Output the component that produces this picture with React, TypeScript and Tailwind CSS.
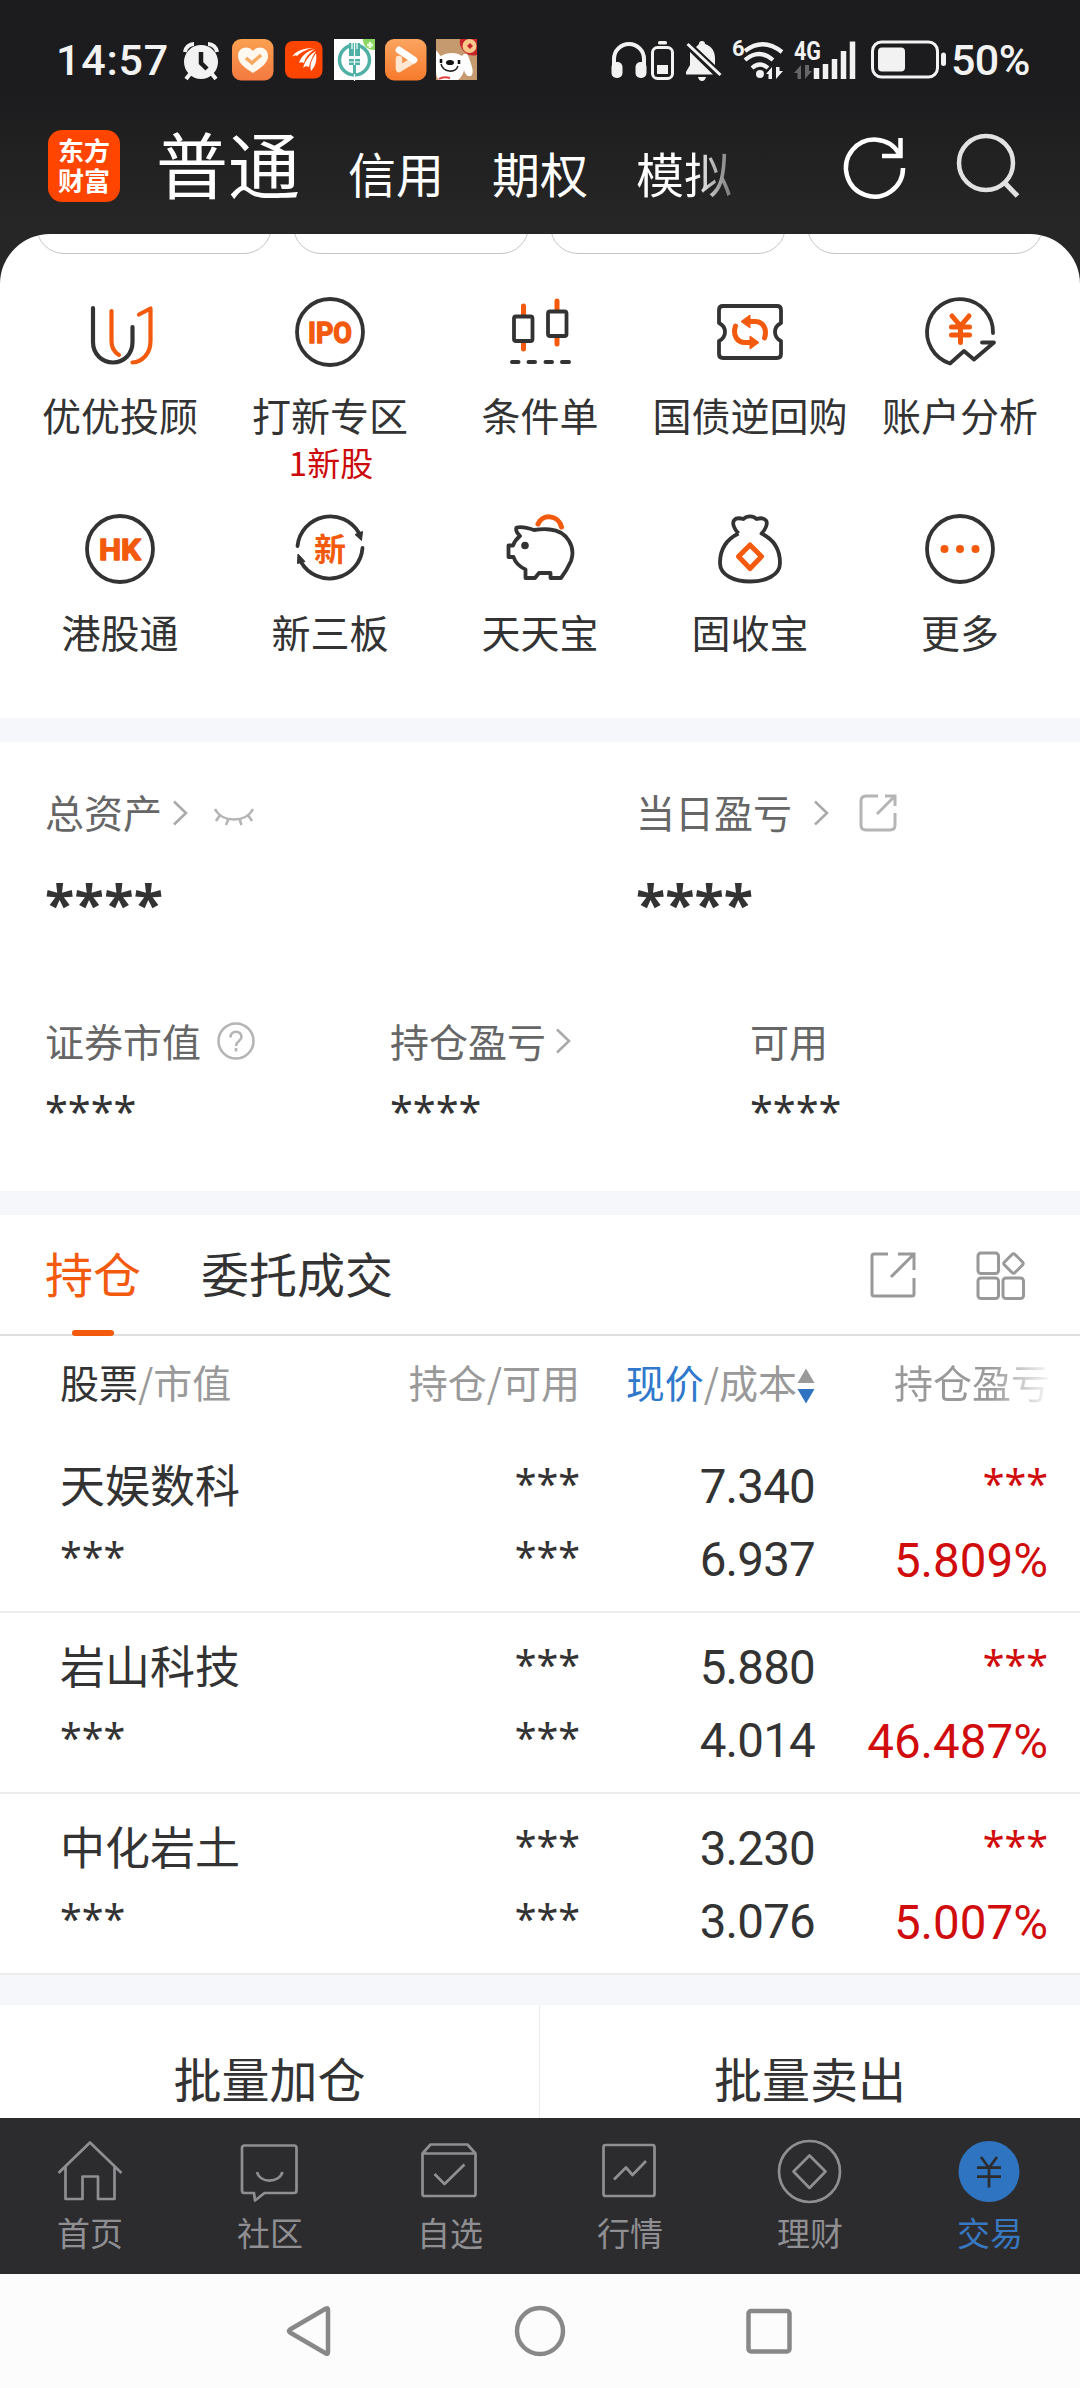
import type { ReactNode } from "react";

const CJK = "font-['Noto_Sans_CJK_SC',sans-serif]";

function Svg({ w, h, className = "", children }: { w: number; h: number; className?: string; children: ReactNode }) {
  return (
    <svg width={w} height={h} viewBox={`0 0 ${w} ${h}`} fill="none" className={`shrink-0 overflow-visible ${className}`}>
      {children}
    </svg>
  );
}

/* ---------- status bar ---------- */

function StatusBar() {
  return (
    <div className="flex h-[120px] items-center pl-[56px] text-[#f2f2f2]">
      <span className="w-[126px] font-[Roboto,sans-serif] text-[43px] font-medium leading-[50px] tracking-[0.8px]">14:57</span>
      <Svg w={38} h={46}>
        <circle cx="19" cy="25" r="17" fill="#f2f2f2" />
        <path d="M3 15a9 9 0 0 1 9-8M35 15a9 9 0 0 0-9-8M8 37l-4 5M30 37l4 5" stroke="#f2f2f2" strokeWidth="4" />
        <path d="M19 15v11l6 6" stroke="#1c1c1e" strokeWidth="4.5" />
      </Svg>
      <Svg w={42} h={46} className="ml-[12px]">
        <defs>
          <linearGradient id="appA" x1="0" y1="0" x2="0" y2="1">
            <stop stopColor="#faa050" />
            <stop offset="1" stopColor="#f47a40" />
          </linearGradient>
        </defs>
        <rect y="2" width="41.500" height="41.500" rx="9" fill="url(#appA)" />
        <path d="M21 36C13 31 6 26 6 19c0-9 10-11 15-5 5-6 15-4 15 5 0 7-7 12-15 17z" fill="#fff8ef" />
        <path d="m14 21 6 5 9-8" stroke="#f9a860" strokeWidth="3.500" />
      </Svg>
      <Svg w={38} h={46} className="ml-[11px]">
        <rect y="4" width="37.500" height="37.500" rx="8" fill="#ff4500" />
        <path d="M7 20c3-6 12-9 22-9-7 1-13 4-17 8-2-1-4 0-5 1zM14 26c2-7 8-12 16-14-6 4-10 9-11 14-2-1-4-1-5 0zM18 31c2-7 6-13 13-17-4 6-6 11-7 16-2-1-4-1-6 1zM26 34c-2-7 2-13 5-18 1 7 0 13-5 18z" fill="#fff" />
      </Svg>
      <Svg w={41} h={46} className="ml-[11px]">
        <rect y="2" width="41" height="41" fill="#fff" />
        <path d="M29 2h12v11c-8 0-12-4-12-11z" fill="#8bd660" />
        <path d="M36 5v6M33 8h6" stroke="#e8ffd8" strokeWidth="2.500" />
        <circle cx="20.500" cy="23" r="15" stroke="#4fb0a5" strokeWidth="3.500" />
        <path d="M15 6h11v13h-11zM15 22h11v6h-11z" fill="#4fb0a5" />
        <path d="M20.500 4v40M18 4v8M23 4v8M15 25h11" stroke="#fff" strokeWidth="1.200" />
        <path d="M20.500 28v9" stroke="#4fb0a5" strokeWidth="3" />
      </Svg>
      <Svg w={42} h={46} className="ml-[10px]">
        <defs>
          <linearGradient id="appB" x1="0" y1="0" x2="0" y2="1">
            <stop stopColor="#fba560" />
            <stop offset="1" stopColor="#f67a2c" />
          </linearGradient>
        </defs>
        <rect y="2" width="41.500" height="41.500" rx="9" fill="url(#appB)" />
        <path d="M14 13 29 23 14 32V22" stroke="#ffe6d0" strokeWidth="6.500" strokeLinecap="round" strokeLinejoin="round" />
        <path d="M14 13 29 23" stroke="#fff" strokeWidth="6.500" strokeLinecap="round" />
      </Svg>
      <Svg w={41} h={46} className="ml-[9px]">
        <rect y="2" width="41" height="41" fill="#c59a6e" />
        <path d="M0 14c2 0 3 4 5 5 6-4 16-4 21 0 3-4 6-2 7 2 2 6 5 12 3 17-3 3-7 0-8-5-1 5-3 7-6 10H3C0 40 0 36 0 32z" fill="#fff" />
        <path d="M24 2h17v16c-9 3-19-6-17-16z" fill="#c9252b" />
        <circle cx="33.500" cy="9" r="7" fill="#f8c98a" />
        <path d="m34 6 3 3-3 3-3-3z" fill="#c9252b" />
        <ellipse cx="14" cy="25.500" rx="4" ry="2.600" fill="#111" />
        <path d="M5 27c2 8 14 10 17 2" stroke="#222" strokeWidth="1.500" />
        <path d="M5 22v4M23 23v4" stroke="#111" strokeWidth="2.600" />
        <path d="M3 42c3-2 7-2 11-1" stroke="#e04040" strokeWidth="2" />
      </Svg>

      <Svg w={36} h={46} className="ml-[134px]">
        <path d="M3 29V22a15 15 0 0 1 30 0v7" stroke="#f2f2f2" strokeWidth="4" />
        <rect x="0.500" y="25" width="11" height="16" rx="5" fill="#f2f2f2" />
        <rect x="24.500" y="25" width="11" height="16" rx="5" fill="#f2f2f2" />
      </Svg>
      <Svg w={24} h={46} className="ml-[4px]">
        <rect x="7" y="4" width="9" height="3.500" rx="1.500" fill="#f2f2f2" />
        <rect x="1.500" y="10.500" width="20" height="31" rx="5" stroke="#f2f2f2" strokeWidth="3" />
        <rect x="6" y="28" width="11" height="9" fill="#f2f2f2" />
      </Svg>
      <Svg w={36} h={46} className="ml-[11px]">
        <path d="M4 15v13l-4 7v2.500h27zM10 10l3-3q0-3 3-3t3 3c7 2 10 8 10 14v7zM12 40h8q-1 4-4 4t-4-4z" fill="#f2f2f2" />
        <path d="m1.500 7 33 31" stroke="#f2f2f2" strokeWidth="3" />
      </Svg>
      <Svg w={54} h={46} className="ml-[10px]">
        <text x="0" y="18.500" fill="#f2f2f2" className="font-[Roboto,sans-serif] text-[22px] font-bold">6</text>
        <path d="M13 14q18-14 37 1M13 23q14-12 28 0M20 31q8-7 16 0" stroke="#f2f2f2" strokeWidth="4.200" />
        <circle cx="28" cy="37" r="4" fill="#f2f2f2" />
        <path d="M34 37l6-7v12h-3.500v-5zM44 30v12l7-8h-3.500v-4z" fill="#f2f2f2" />
      </Svg>
      <Svg w={64} h={46} className="ml-[8px]">
        <text x="0" y="23" textLength="27" lengthAdjust="spacingAndGlyphs" fill="#f2f2f2" className="font-[Roboto,sans-serif] text-[26px] font-bold">4G</text>
        <path d="M0 36l7-8v14H3.500v-6zM11 28v14l7-8h-3v-6z" fill="#666" />
        <path d="M22.500 31v11M31.500 27v15M40.500 22v20M49.500 14v28M58.500 4.500v37.500" stroke="#f2f2f2" strokeWidth="5.500" />
      </Svg>
      <Svg w={77} h={46} className="ml-[13px]">
        <rect x="1.500" y="5" width="65" height="35" rx="9" stroke="#f2f2f2" strokeWidth="3" />
        <rect x="7" y="10.500" width="27" height="24" rx="4" fill="#f2f2f2" />
        <rect x="70" y="15.500" width="5" height="13.500" rx="2.500" fill="#f2f2f2" />
      </Svg>
      <span className="ml-[3px] font-[Roboto,sans-serif] text-[43px] font-medium leading-[50px] tracking-[-0.600px]">50%</span>
    </div>
  );
}

/* ---------- header ---------- */

function Header() {
  return (
    <div className="flex h-[114px] pl-[48px] text-white">
      <div className="mt-[10px] flex h-[72px] w-[72px] shrink-0 flex-col items-center justify-center rounded-[14px] bg-[#ff4500] text-[26px] font-bold leading-[30px] pb-[2px]">
        <span>东方</span>
        <span>财富</span>
      </div>
      <div className="ml-[36px] flex h-[100px] w-[640px] items-baseline whitespace-nowrap text-[48px] leading-[84px]">
        <span className="text-[72px]">普通</span>
        <span className="ml-[48px]">信用</span>
        <span className="ml-[48px]">期权</span>
        <span className="ml-[48px] bg-linear-to-r from-white from-60% to-[#777] bg-clip-text text-transparent">模拟</span>
      </div>
      <Svg w={66} h={66} className="ml-[47px] mt-[14px]">
        <path d="M60 34A28.500 28.500 0 1 1 56 19.500" stroke="#fff" strokeWidth="4.500" />
        <path d="M39 22h18.500V4" stroke="#fff" strokeWidth="4.500" />
      </Svg>
      <Svg w={66} h={66} className="ml-[48px] mt-[13px]">
        <circle cx="29" cy="30" r="27" stroke="#e2e2e2" strokeWidth="4.500" />
        <path d="m47 49 13.500 14" stroke="#e2e2e2" strokeWidth="5" />
      </Svg>
    </div>
  );
}

/* ---------- shortcut grid ---------- */

const INK = "#333333";
const ORANGE = "#f35a0d";

const IconUJ = () => (
  <Svg w={72} h={72}>
    <g strokeWidth="4.200" strokeLinecap="round" strokeLinejoin="round">
      <path d="M9 12V46C9 58 18 66.500 29 66.500S48.500 58 48.500 46V31" stroke={INK} />
      <path d="M27.500 15V45C27.500 51 30 56 35 59M55 18.500 66.500 12.500V45C66.500 58 58 66 48.500 66.500" stroke={ORANGE} />
    </g>
  </Svg>
);

const IconLetters = ({ text, width }: { text: string; width: number }) => (
  <Svg w={72} h={72}>
    <circle cx="36" cy="36" r="33" stroke={INK} strokeWidth="3.800" />
    <text x={36 - width / 2} y="46.500" textLength={width} lengthAdjust="spacingAndGlyphs" fill={ORANGE} stroke={ORANGE} strokeWidth="1.400" strokeLinejoin="round" className="font-[Roboto,sans-serif] text-[30px] font-bold">
      {text}
    </text>
  </Svg>
);

const IconCandles = () => (
  <Svg w={72} h={72}>
    <path d="M19.500 10v43M53 5v43" stroke={ORANGE} strokeWidth="5" strokeLinecap="round" />
    <g stroke={INK} strokeWidth="3.800" fill="#fff">
      <rect x="10" y="20.500" width="18.500" height="24.500" rx="2" />
      <rect x="44" y="15.500" width="18.500" height="24.500" rx="2" />
    </g>
    <path d="M8 66h6.500M24.500 66H31M41.500 66H48M58 66h7" stroke={INK} strokeWidth="4" strokeLinecap="round" />
  </Svg>
);

const IconTicket = () => (
  <Svg w={72} h={72}>
    <path d="M9 10H63Q67 10 67 14V27C59 31 59 41 67 45V58Q67 62 63 62H9Q5 62 5 58V45C13 41 13 31 5 27V14Q5 10 9 10z" stroke={INK} strokeWidth="3.800" strokeLinejoin="round" />
    <g stroke={ORANGE} strokeWidth="5" strokeLinecap="round">
      <path d="M35 25.500H41C49 25.500 53.500 33 50.500 42M37 46.500H31C23 46.500 18.500 39 21.500 30" />
    </g>
    <path d="M27 25.500 36 19V32zM45 46.500 36 40V53z" fill={ORANGE} stroke={ORANGE} strokeLinejoin="round" />
  </Svg>
);

const IconAnalysis = () => (
  <Svg w={72} h={72}>
    <path d="M69 37A33 33 0 1 0 26 67.500L40 55 50 63.500 70 46.500H58" stroke={INK} strokeWidth="3.800" strokeLinecap="round" strokeLinejoin="round" />
    <path d="m28 20 8.500 10L45 20M27.500 31h18M27.500 39h18M36.500 30v16.500" stroke={ORANGE} strokeWidth="5" strokeLinecap="round" />
  </Svg>
);

const IconXin = () => (
  <Svg w={72} h={72}>
    <path d="M3.500 33A33 33 0 0 1 65 20M68.500 35A33 33 0 0 1 7 49" stroke={INK} strokeWidth="3.800" strokeLinecap="round" />
    <path d="M61 21.500 68.500 18.500 67.500 27.500zM4 41 11 48.500 3.500 50.500z" fill={INK} stroke={INK} strokeLinejoin="round" />
    <text x="20" y="47.500" fill={ORANGE} className="text-[32px] font-bold">新</text>
  </Svg>
);

const IconPig = () => (
  <Svg w={72} h={72}>
    <path d="M34 11C38 1 54 1 57.500 14" stroke={ORANGE} strokeWidth="5" strokeLinecap="round" />
    <path d="M4.500 32.500H9Q11 27 16 23Q11 18 12.500 14.500Q19 13 30 17C37 16 42 16 46 16.500C63 18 72 34 67 48Q63 57 57 65H46.500V60H35L31 65H21.500V56.500Q12 52 9.500 44H4.500z" stroke={INK} strokeWidth="3.800" strokeLinejoin="round" fill="#fff" />
    <circle cx="21" cy="32.500" r="3.800" fill={INK} />
  </Svg>
);

const IconBag = () => (
  <Svg w={72} h={72}>
    <path d="M24.500 20.500C11 27 6 38 6 50C6 62 20 68.500 36 68.500S66 62 66 50C66 38 61 27 47.500 20.500C52 16 54 10 52 7.500C50 4.500 46 5 42.500 6C39 2.500 33 2.500 29.500 6C26 5 22 4.500 20 7.500C18 10 20 16 24.500 20.500" stroke={INK} strokeWidth="3.800" strokeLinejoin="round" />
    <path d="M36 32 47.500 43.500 36 55.500 24.500 43.500z" stroke={ORANGE} strokeWidth="5" strokeLinejoin="round" />
  </Svg>
);

const IconMore = () => (
  <Svg w={72} h={72}>
    <circle cx="36" cy="36" r="33" stroke={INK} strokeWidth="3.800" />
    <g fill={ORANGE}>
      <circle cx="20.500" cy="36" r="4" />
      <circle cx="36" cy="36" r="4" />
      <circle cx="51.500" cy="36" r="4" />
    </g>
  </Svg>
);

const SHORTCUTS: { label: string; note?: string; icon: ReactNode }[] = [
  { label: "优优投顾", icon: <IconUJ /> },
  { label: "打新专区", note: "1新股", icon: <IconLetters text="IPO" width={44} /> },
  { label: "条件单", icon: <IconCandles /> },
  { label: "国债逆回购", icon: <IconTicket /> },
  { label: "账户分析", icon: <IconAnalysis /> },
  { label: "港股通", icon: <IconLetters text="HK" width={42} /> },
  { label: "新三板", icon: <IconXin /> },
  { label: "天天宝", icon: <IconPig /> },
  { label: "固收宝", icon: <IconBag /> },
  { label: "更多", icon: <IconMore /> },
];

function Shortcuts() {
  return (
    <div className="h-[484px] overflow-hidden rounded-t-[50px] bg-white">
      <div className="flex h-[20px] items-end gap-[21px] pl-[36px]">
        {[0, 1, 2, 3].map((i) => (
          <div key={i} className="h-[56px] w-[236px] shrink-0 rounded-[28px] border border-[#c4c4c4]" />
        ))}
      </div>
      <div className="mt-[42px] grid grid-cols-5 auto-rows-[217px] px-[15px]">
        {SHORTCUTS.map((s) => (
          <div key={s.label} className="flex flex-col items-center whitespace-nowrap text-[#333]">
            {s.icon}
            <span className="mt-[16px] text-[39px] leading-[60px]">{s.label}</span>
            {s.note && <span className="pl-[2px] text-[33px] leading-[36px] text-[#cc0a0a]">{s.note}</span>}
          </div>
        ))}
      </div>
    </div>
  );
}

/* ---------- assets ---------- */

const Chevron = ({ className }: { className: string }) => (
  <Svg w={18} h={28} className={className}>
    <path d="M3 2.500 15 14 3 25.500" stroke="#aaa" strokeWidth="2.600" />
  </Svg>
);

function Assets() {
  return (
    <div className="h-[449px] bg-white text-[39px] leading-[60px] text-[#666]">
      <div className="flex h-[101px] pt-[40px]">
        <div className="flex w-[591px] items-center pl-[45px]">
          <span className="-mt-[3px]">总资产</span>
          <Chevron className="ml-[9px]" />
          <Svg w={42} h={24} className="ml-[24px] mt-[8px]">
            <path d="M2 4C9 18 33 18 40 4M7 10l-4 6M15.500 14 13 20M26.500 14l2 6M35 10l4 6" stroke="#b5b5b5" strokeWidth="2.600" />
          </Svg>
        </div>
        <div className="flex items-center pl-[45px]">
          <span className="-mt-[3px]">当日盈亏</span>
          <Chevron className="ml-[20px]" />
          <Svg w={40} h={40} className="ml-[28px]">
            <path d="M20 3H8Q3 3 3 8V32Q3 37 8 37H32Q37 37 37 32V20M27 3H37V13M36.500 3.500 19 21" stroke="#b5b5b5" strokeWidth="3" />
          </Svg>
        </div>
      </div>
      <div className="flex h-[148px] pt-[20px] font-['Noto_Sans',sans-serif] text-[54px] font-bold leading-[80px] text-[#333]">
        <span className="w-[591px] pl-[45px] tracking-[0.300px]">****</span>
        <span className="pl-[45px]">****</span>
      </div>
      <div className="flex h-[60px] items-center pl-[45px] pt-[40px]">
        <div className="flex w-[345px] items-center">
          <span className="-mt-[3px]">证券市值</span>
          <Svg w={40} h={40} className="ml-[15px]">
            <circle cx="20" cy="20" r="17.500" stroke="#b5b5b5" strokeWidth="2.600" />
            <path d="M14.500 16.500C14.500 9 25.500 9 25.500 16C25.500 20 20 20 20 25M20 27v3.500" stroke="#b5b5b5" strokeWidth="2.600" />
          </Svg>
        </div>
        <div className="flex w-[360px] items-center">
          <span className="-mt-[3px]">持仓盈亏</span>
          <Chevron className="ml-[8px]" />
        </div>
        <span className="-mt-[3px]">可用</span>
      </div>
      <div className="flex pl-[45px] pt-[30px] font-['Noto_Sans',sans-serif] text-[41.500px] text-[#333]">
        <span className="w-[345px]">****</span>
        <span className="w-[360px]">****</span>
        <span>****</span>
      </div>
    </div>
  );
}

/* ---------- positions ---------- */

const POSITIONS = [
  { name: "天娱数科", price: "7.340", cost: "6.937", gain: "5.809%" },
  { name: "岩山科技", price: "5.880", cost: "4.014", gain: "46.487%" },
  { name: "中化岩土", price: "3.230", cost: "3.076", gain: "5.007%" },
];

const Mask = () => <span className="block h-[73px] font-['Noto_Sans',sans-serif] text-[39.500px] leading-[73px]">***</span>;
const Num = ({ children }: { children: ReactNode }) => (
  <span className="block h-[73px] font-[Roboto,sans-serif] text-[47.500px] leading-[72px] tracking-[-0.8px]">{children}</span>
);
const Gain = ({ children }: { children: ReactNode }) => (
  <span className="mt-[5px] block h-[72px] font-[Roboto,sans-serif] text-[47.500px] leading-[72px]">{children}</span>
);

function Positions() {
  return (
    <div className="bg-white">
      <div className="flex h-[121px] border-b-2 border-[#e0e0e0] pl-[45px] text-[48px] leading-[115px] text-[#333]">
        <div className="relative h-[121px] text-[#f35a0d]">
          持仓
          <div className="absolute bottom-0 left-[27px] h-[6px] w-[42px] rounded-[3px] bg-[#f35a0d]" />
        </div>
        <span className="ml-[60px]">委托成交</span>
        <Svg w={50} h={50} className="ml-auto mt-[35px]">
          <path d="M20 4H6Q4 4 4 6V44Q4 46 6 46H44Q46 46 46 44V28M30 4H46V20M46 4 23 27" stroke="#999" strokeWidth="3" />
        </Svg>
        <Svg w={54} h={54} className="ml-[56px] mr-[52px] mt-[34px]">
          <g stroke="#999" strokeWidth="3">
            <rect x="4" y="4" width="20.500" height="20.500" rx="3" />
            <rect x="4" y="29" width="20.500" height="20.500" rx="3" />
            <rect x="29" y="29" width="20.500" height="20.500" rx="3" />
            <path d="M38 5.500Q39.500 4 41 5.500L48.500 13Q50 14.500 48.500 16L41 23.500Q39.500 25 38 23.500L30.500 16Q29 14.500 30.500 13z" />
          </g>
        </Svg>
      </div>
      <div className="grid h-[96px] grid-cols-[520px_235px_265px] pl-[60px] text-[39px] leading-[91px] text-[#999]">
        <div className="flex justify-between">
          <span><span className="text-[#333]">股票</span>/市值</span>
          <span>持仓/可用</span>
        </div>
        <div className="flex justify-end">
          <span><span className="text-[#2f78cc]">现价</span>/成本</span>
          <Svg w={18} h={38} className="mt-[31px]">
            <path d="M9 1.500 17.500 16H.5z" fill="#999" />
            <path d="M9 36.500 17.500 22H.5z" fill="#2f74c0" />
          </Svg>
        </div>
        <div className="ml-[79px] w-[160px] bg-linear-to-r from-[#999] from-60% to-[#fff] bg-clip-text text-transparent">持仓盈亏</div>
      </div>
      {POSITIONS.map((p) => (
        <div key={p.name} className="grid h-[181px] grid-cols-[300px_220px_235px_233px] border-b-2 border-[#ececec] pl-[60px] text-right text-[#333]">
          <div className="pt-[15px] text-left">
            <span className="block h-[73px] text-[45px] leading-[74px]">{p.name}</span>
            <Mask />
          </div>
          <div className="pt-[15px]">
            <Mask />
            <Mask />
          </div>
          <div className="pt-[19px]">
            <Num>{p.price}</Num>
            <Num>{p.cost}</Num>
          </div>
          <div className="pt-[15px] text-[#d00c0c]">
            <Mask />
            <Gain>{p.gain}</Gain>
          </div>
        </div>
      ))}
    </div>
  );
}

/* ---------- bottom navigation ---------- */

const TABS: { label: string; icon: ReactNode }[] = [
  {
    label: "首页",
    icon: <path d="M4.500 37 36 6.500 67.500 37M11.500 31V63H28.500V40.500H44V63H60.500V31" />,
  },
  {
    label: "社区",
    icon: <path d="M10.500 9.500H60Q62.500 9.500 62.500 12V54.500Q62.500 57 60 57H30.500L21 64.500 20 57H10.500Q8 57 8 54.500V12Q8 9.500 10.500 9.500zM23 36C26 47.500 45 47.500 48.500 36" />,
  },
  {
    label: "自选",
    icon: <path d="M8.500 17.500H61.500V58Q61.500 60 59.500 60H10.500Q8.500 60 8.500 58zL16.500 8.500H53.500L61.500 17.500M20.500 38 30.500 48 50.500 28.500" />,
  },
  {
    label: "行情",
    icon: (
      <>
        <rect x="9.500" y="9" width="51" height="51" rx="2" />
        <path d="M20 43.500 32 31.500 38.500 39 52 25" />
      </>
    ),
  },
  {
    label: "理财",
    icon: (
      <>
        <circle cx="35.500" cy="35.500" r="30.500" />
        <path d="M35.500 19.500 51.500 35.500 35.500 52 19.500 35.500z" />
      </>
    ),
  },
  {
    label: "交易",
    icon: (
      <>
        <circle cx="35" cy="35.500" r="30.500" fill="#2f74c0" stroke="none" />
        <path d="m27 21 8 11 8-11M23 31.700H47M23 40.700H47M35 32V51.500" stroke="#2c2c2e" />
      </>
    ),
  },
];

function TabBar() {
  return (
    <div className="grid h-[156px] grid-cols-6 bg-[#2c2c2e] pt-[18px] text-[33px] leading-[48px] text-[#8f8f93]">
      {TABS.map((t) => (
        <div key={t.label} className="flex flex-col items-center last:text-[#3878c0]">
          <Svg w={72} h={72}>
            <g stroke="#8f8f93" strokeWidth="2.700" strokeLinejoin="round">{t.icon}</g>
          </Svg>
          <span>{t.label}</span>
        </div>
      ))}
    </div>
  );
}

function SystemNav() {
  return (
    <div className="flex h-[114px] items-center bg-[#fcfcfc] pl-[285px]">
      <Svg w={48} h={56}>
        <path d="M41 5.500Q43 4.500 43 7V49Q43 51.500 41 50.500L5 29.500Q3 28 5 26.500z" stroke="#888" strokeWidth="4.500" strokeLinejoin="round" />
      </Svg>
      <Svg w={56} h={56} className="ml-[179px]">
        <circle cx="28" cy="28" r="23" stroke="#888" strokeWidth="4.500" />
      </Svg>
      <Svg w={50} h={50} className="ml-[176px]">
        <rect x="4.500" y="5" width="41" height="40.500" rx="2.500" stroke="#888" strokeWidth="4.500" />
      </Svg>
    </div>
  );
}

export default function App() {
  return (
    <div className={`flex h-[2388px] w-[1080px] flex-col overflow-hidden bg-[#f6f7fa] ${CJK}`}>
      <div className="bg-[linear-gradient(180deg,#1c1c1e_0,#1c1c1e_90px,#262626_220px)]">
        <StatusBar />
        <Header />
        <Shortcuts />
      </div>
      <div className="mt-[24px]">
        <Assets />
      </div>
      <div className="mt-[24px]">
        <Positions />
      </div>
      <div className="mt-[30px] grid h-[113px] shrink-0 grid-cols-2 overflow-hidden bg-white text-center text-[48px] leading-[144px] text-[#333]">
        <span className="border-r border-[#ececec]">批量加仓</span>
        <span>批量卖出</span>
      </div>
      <TabBar />
      <SystemNav />
    </div>
  );
}
